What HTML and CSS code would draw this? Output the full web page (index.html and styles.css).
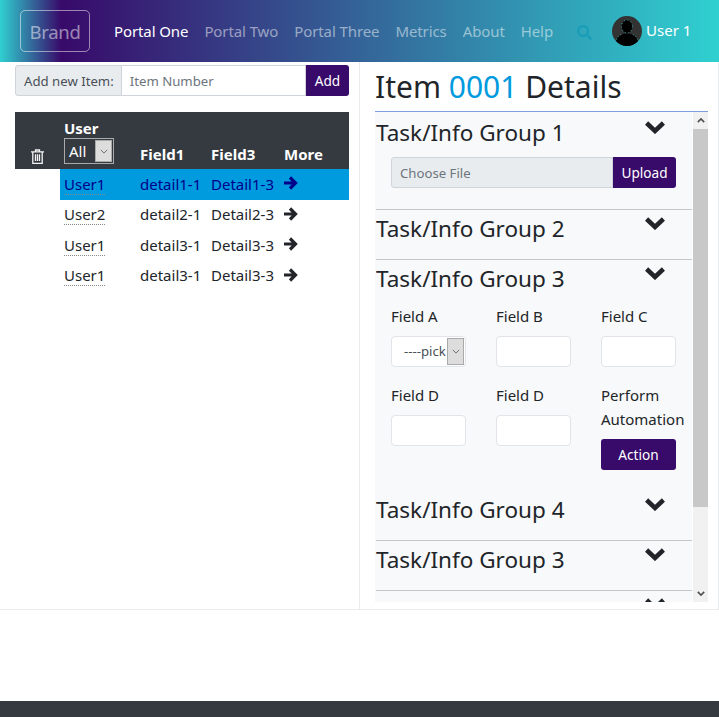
FILE: index.html
```html
<!DOCTYPE html>
<html lang="en">
<head>
<meta charset="UTF-8">
<meta name="viewport" content="width=device-width, initial-scale=1.0">
<title>Item Details</title>
<link rel="stylesheet" href="styles.css">
</head>
<body>
  <nav class="navbar">
    <a href="#" class="brand">Brand</a>
    <ul class="nav-links">
      <li><a href="#" class="active">Portal One</a></li>
      <li><a href="#">Portal Two</a></li>
      <li><a href="#">Portal Three</a></li>
      <li><a href="#">Metrics</a></li>
      <li><a href="#">About</a></li>
      <li><a href="#">Help</a></li>
    </ul>
    <svg class="search-icon" viewBox="0 0 512 512"><path d="M505 442.700L405.300 343c-4.500-4.500-10.600-7-17-7H372c27.600-35.300 44-79.700 44-128C416 93.100 322.900 0 208 0S0 93.100 0 208s93.100 208 208 208c48.300 0 92.700-16.400 128-44v16.300c0 6.400 2.500 12.500 7 17l99.700 99.700c9.400 9.400 24.600 9.400 33.900 0l28.300-28.300c9.400-9.400 9.400-24.600.1-34zM208 336c-70.700 0-128-57.200-128-128 0-70.700 57.200-128 128-128 70.700 0 128 57.200 128 128 0 70.700-57.200 128-128 128z"/></svg>
    <div class="user">
      <svg class="avatar" viewBox="0 0 30 30">
        <circle cx="15" cy="15" r="15" fill="#333"/>
        <ellipse cx="15" cy="10.500" rx="5.500" ry="6.500" fill="#000" stroke="#3fe0d8" stroke-width=".7" stroke-dasharray="1 2.500"/>
        <path d="M4 25c1-5 5.500-7.500 11-7.500S25 20 26 25A15 15 0 0 1 15 30 15 15 0 0 1 4 25z" fill="#000"/>
        <path d="M4.500 23.500c1.200-3 3.500-5 6.500-5.700M25.500 23.500c-1.200-3-3.500-5-6.500-5.700" fill="none" stroke="#3fe0d8" stroke-width=".7" stroke-dasharray="1 2"/>
      </svg>
      <span>User 1</span>
    </div>
  </nav>

  <main class="content">
    <section class="left-col">
      <div class="add-item">
        <label class="add-label">Add new Item:</label>
        <input type="text" class="add-input" placeholder="Item Number">
        <button class="btn add-btn">Add</button>
      </div>
      <table class="items">
        <thead>
          <tr>
            <th class="trash-cell">
              <svg class="trash" viewBox="0 0 13 15"><path d="M4.500 2.500V1h4v1.500M0 2.800h13M1.800 3v11.300h9.400V3M4.500 5.300v6.800M6.500 5.300v6.800M8.500 5.300v6.800"/></svg>
            </th>
            <th class="user-cell">User
              <div class="fake-select"><span>All</span><span class="select-arrow"><svg viewBox="0 0 10 6"><path d="M1 1l4 4 4-4"/></svg></span></div>
            </th>
            <th>Field1</th>
            <th>Field3</th>
            <th>More</th>
          </tr>
        </thead>
        <tbody>
          <tr class="selected">
            <td class="blank"></td>
            <td><span class="user-link">User1</span></td>
            <td>detail1-1</td>
            <td>Detail1-3</td>
            <td class="more"><svg class="arrow" viewBox="0 0 14 14"><path d="M0 7h11M6 1.500L11.500 7 6 12.500"/></svg></td>
          </tr>
          <tr>
            <td class="blank"></td>
            <td><span class="user-link">User2</span></td>
            <td>detail2-1</td>
            <td>Detail2-3</td>
            <td class="more"><svg class="arrow" viewBox="0 0 14 14"><path d="M0 7h11M6 1.500L11.500 7 6 12.500"/></svg></td>
          </tr>
          <tr>
            <td class="blank"></td>
            <td><span class="user-link">User1</span></td>
            <td>detail3-1</td>
            <td>Detail3-3</td>
            <td class="more"><svg class="arrow" viewBox="0 0 14 14"><path d="M0 7h11M6 1.500L11.500 7 6 12.500"/></svg></td>
          </tr>
          <tr>
            <td class="blank"></td>
            <td><span class="user-link">User1</span></td>
            <td>detail3-1</td>
            <td>Detail3-3</td>
            <td class="more"><svg class="arrow" viewBox="0 0 14 14"><path d="M0 7h11M6 1.500L11.500 7 6 12.500"/></svg></td>
          </tr>
        </tbody>
      </table>
    </section>

    <section class="right-col">
      <h1 class="title">Item <span class="item-no">0001</span> Details</h1>
      <div class="accordion">
        <div class="groups">
          <div class="group group-1">
            <div class="group-head"><h2>Task/Info Group 1</h2><svg class="chevron" viewBox="0 0 22 14"><path d="M2.600 3L11 11l8.400-8"/></svg></div>
            <div class="upload">
              <div class="file-name">Choose File</div>
              <button class="btn upload-btn">Upload</button>
            </div>
          </div>
          <div class="group">
            <div class="group-head"><h2>Task/Info Group 2</h2><svg class="chevron" viewBox="0 0 22 14"><path d="M2.600 3L11 11l8.400-8"/></svg></div>
          </div>
          <div class="group group-3">
            <div class="group-head"><h2>Task/Info Group 3</h2><svg class="chevron" viewBox="0 0 22 14"><path d="M2.600 3L11 11l8.400-8"/></svg></div>
            <div class="field-grid">
              <div class="field">
                <label>Field A</label>
                <div class="pick"><span class="pick-text">----pick</span><span class="select-arrow"><svg viewBox="0 0 10 6"><path d="M1 1l4 4 4-4"/></svg></span></div>
              </div>
              <div class="field"><label>Field B</label><input type="text"></div>
              <div class="field"><label>Field C</label><input type="text"></div>
              <div class="field"><label>Field D</label><input type="text"></div>
              <div class="field"><label>Field D</label><input type="text"></div>
              <div class="field">
                <label>Perform Automation</label>
                <button class="btn action-btn">Action</button>
              </div>
            </div>
          </div>
          <div class="group">
            <div class="group-head"><h2>Task/Info Group 4</h2><svg class="chevron" viewBox="0 0 22 14"><path d="M2.600 3L11 11l8.400-8"/></svg></div>
          </div>
          <div class="group">
            <div class="group-head"><h2>Task/Info Group 3</h2><svg class="chevron" viewBox="0 0 22 14"><path d="M2.600 3L11 11l8.400-8"/></svg></div>
          </div>
          <div class="group">
            <div class="group-head"><h2>Task/Info Group 5</h2><svg class="chevron" viewBox="0 0 22 14"><path d="M2.600 3L11 11l8.400-8"/></svg></div>
          </div>
        </div>
        <div class="scrollbar">
          <div class="scroll-btn"><svg viewBox="0 0 10 6"><path d="M1 5l4-4 4 4"/></svg></div>
          <div class="scroll-track"><div class="scroll-thumb"></div></div>
          <div class="scroll-btn"><svg viewBox="0 0 10 6"><path d="M1 1l4 4 4-4"/></svg></div>
        </div>
      </div>
    </section>
  </main>

  <footer class="footer"></footer>
</body>
</html>
```
FILE: styles.css
```css
* {
  box-sizing: border-box;
}

body {
  margin: 0;
  height: 717px;
  overflow: hidden;
  display: flex;
  flex-direction: column;
  font-family: "Noto Sans", "Open Sans", sans-serif;
  font-size: 15px;
  color: #212529;
  background: #fff;
}

/* Top bar */
.navbar {
  height: 62px;
  display: flex;
  align-items: center;
  padding: 0 16px 0 20px;
  background: linear-gradient(90deg, #2fd0d0 0%, #380a6a 8.500%, #2fd0d0 100%);
  flex: none;
}

.brand {
  width: 70px;
  height: 42px;
  display: flex;
  align-items: center;
  justify-content: center;
  margin-right: 24px;
  border: 1px solid rgba(255, 255, 255, .5);
  border-radius: 5px;
  color: rgba(255, 255, 255, .5);
  font-size: 18.500px;
  letter-spacing: -.3px;
  text-decoration: none;
}

.nav-links {
  display: flex;
  gap: 16px;
  margin: 0;
  padding: 0;
  list-style: none;
  letter-spacing: -.1px;
}

.nav-links a {
  color: rgba(255, 255, 255, .5);
  text-decoration: none;
}

.nav-links a.active {
  color: #fff;
}

.search-icon {
  width: 15px;
  height: 15px;
  margin: 2px 0 0 24px;
  fill: #1a9db8;
}

.user {
  display: flex;
  align-items: center;
  gap: 4px;
  margin-left: 20px;
  color: #fff;
}

.user span {
  margin-top: -2px;
}

.avatar {
  width: 30px;
  height: 30px;
}

/* Page body */
.content {
  height: 548px;
  display: flex;
  flex: none;
  border-bottom: 1px solid #e9ecef;
}

.left-col {
  width: 360px;
  padding: 3px 10px 0 15px;
  border-right: 1px solid #e9ecef;
}

.add-item {
  display: flex;
  height: 31px;
}

.add-label {
  display: flex;
  align-items: center;
  padding: 0 7px 0 8px;
  background: #e9ecef;
  border: 1px solid #ced4da;
  border-radius: 3px 0 0 3px;
  color: #495057;
  font-size: 13.200px;
}

.add-input {
  flex: 1;
  min-width: 0;
  padding: 0 8px;
  border: 1px solid #ced4da;
  border-left: 0;
  font: inherit;
  font-size: 13.200px;
  outline: none;
}

.add-input::placeholder {
  color: #6c757d;
}

.btn {
  background: #380a6a;
  border: 0;
  border-radius: 3px;
  color: #fff;
  font: inherit;
  font-size: 13.600px;
}

.add-btn {
  width: 43px;
  border-radius: 0 3px 3px 0;
}

/* Items table */
.items {
  width: 334px;
  margin-top: 16px;
  border-collapse: collapse;
  table-layout: fixed;
}

.items th {
  height: 57px;
  padding: 0 0 5px 5px;
  background: #343a40;
  color: #fff;
  font-size: 15px;
  font-weight: 700;
  text-align: left;
  vertical-align: bottom;
}

.items th:nth-child(1) { width: 45px; }
.items th:nth-child(2) { width: 75px; }
.items th:nth-child(3) { width: 71px; }
.items th:nth-child(4) { width: 73px; }

.items th.trash-cell {
  padding: 0 0 5px 16px;
}

.trash {
  display: block;
  width: 13px;
  height: 15px;
  fill: none;
  stroke: #f5f5f5;
  stroke-width: 1.300;
}

.items th.user-cell {
  padding-left: 4px;
  line-height: 19px;
}

.fake-select {
  display: flex;
  align-items: center;
  justify-content: space-between;
  width: 50px;
  height: 26px;
  padding: 1px 1px 1px 4px;
  border: 1px solid #aaa;
  font-weight: 400;
}

.select-arrow {
  display: flex;
  align-items: center;
  justify-content: center;
  width: 17px;
  height: 100%;
  background: #ddd;
  border: 1px solid #aaa;
}

.select-arrow svg {
  width: 8px;
  height: 5px;
  fill: none;
  stroke: #555;
  stroke-width: 1;
}

.items td {
  height: 31px;
  padding: 0 0 2px 4px;
  white-space: nowrap;
}

.items tr:nth-child(even) td {
  height: 30px;
}

.items td.blank {
  padding: 0;
}

.items td:nth-child(n+3) {
  padding-left: 5px;
}

.items .selected td:not(.blank) {
  background: #009ade;
  color: #00008b;
}

.user-link {
  border-bottom: 1px dotted #888;
}

.more {
  vertical-align: middle;
}

.arrow {
  display: block;
  width: 14px;
  height: 14px;
  margin-top: -1px;
  fill: none;
  stroke: #212529;
  stroke-width: 3.200;
}

.selected .arrow {
  stroke: #00008b;
}

/* Details column */
.right-col {
  width: 359px;
  padding: 0 10px 0 15px;
  display: flex;
  flex-direction: column;
  min-height: 0;
  border-right: 1px solid #e9ecef;
}

.title {
  height: 49px;
  margin: 0;
  font-size: 30px;
  font-weight: 400;
  line-height: 50px;
}

.item-no {
  color: #009ade;
}

.accordion {
  height: 491px;
  display: flex;
  border-top: 1px solid #7f9fe0;
  overflow: hidden;
}

.groups {
  width: 317px;
  flex: none;
  background: #f8f9fa;
  overflow: hidden;
}

.group {
  margin-left: 1px;
  border-bottom: 1px solid #c4c6c8;
}

.group:last-child {
  border-bottom: 0;
}

.group-head {
  height: 49px;
  display: flex;
  justify-content: space-between;
  align-items: flex-start;
  padding-right: 26px;
}

.group-head h2 {
  margin: 0;
  font-size: 22.500px;
  font-weight: 400;
  line-height: 38px;
}

.chevron {
  width: 22px;
  height: 14px;
  margin-top: 6px;
  fill: none;
  stroke: #212529;
  stroke-width: 4.500;
}

.group-1 {
  height: 98px;
}

.group-1 .group-head {
  height: 45px;
  padding-top: 2px;
}

.upload {
  display: flex;
  width: 285px;
  height: 31px;
  margin-left: 15px;
}

.file-name {
  flex: 1;
  display: flex;
  align-items: center;
  padding-left: 8px;
  background: #e9ecef;
  border: 1px solid #ced4da;
  border-radius: 3px 0 0 3px;
  color: #6c757d;
  font-size: 13.200px;
}

.upload-btn {
  width: 63px;
  border-radius: 0 3px 3px 0;
}

.group-3 {
  height: 231px;
  border-bottom: 0;
}

.group-3 .group-head {
  height: 45px;
}

.field-grid {
  display: grid;
  grid-template-columns: 105px 105px 90px;
  row-gap: 17px;
  margin-left: 15px;
}

.field label {
  display: block;
  margin: -1px 0 8px;
  line-height: 24px;
}

.field input,
.pick {
  display: block;
  width: 75px;
  height: 31px;
  background: #fff;
  border: 1px solid #e1e4e8;
  border-radius: 4px;
}

.pick {
  display: flex;
  justify-content: flex-end;
  padding: 1px;
  font-size: 13.200px;
  color: #495057;
  overflow: hidden;
}

.pick-text {
  flex: 1;
  padding: 4px 0 0 11px;
  overflow: hidden;
  white-space: nowrap;
}

.action-btn {
  display: block;
  width: 75px;
  height: 31px;
}

/* Scrollbar */
.scrollbar {
  width: 15px;
  margin-left: 1px;
  display: flex;
  flex-direction: column;
  background: #f1f1f1;
}

.scroll-btn {
  height: 17px;
  display: flex;
  align-items: center;
  justify-content: center;
}

.scroll-btn svg {
  width: 8px;
  height: 5px;
  fill: none;
  stroke: #505050;
  stroke-width: 2;
}

.scroll-track {
  flex: 1;
}

.scroll-thumb {
  height: 378px;
  background: #c8c8c8;
}

.footer {
  flex: 1;
  margin-top: 91px;
  background: #343a40;
}
```
